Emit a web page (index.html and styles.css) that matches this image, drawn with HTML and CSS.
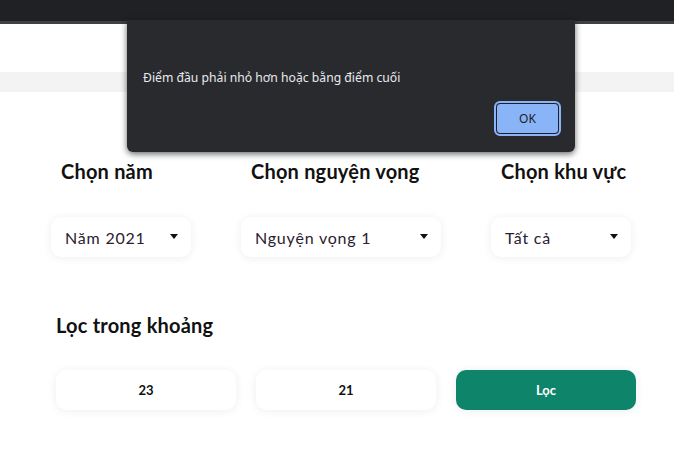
FILE: index.html
```html
<!DOCTYPE html>
<html lang="vi">
<head>
<meta charset="utf-8">
<link rel="stylesheet" href="styles.css">
</head>
<body>
<div class="topbar"></div>
<div class="header"></div>
<div class="band"></div>
<main class="content">
  <section class="filters">
    <div class="field">
      <h3 class="label">Chọn năm</h3>
      <div class="select sel-sm"><span>Năm 2021</span><i class="caret"></i></div>
    </div>
    <div class="field">
      <h3 class="label">Chọn nguyện vọng</h3>
      <div class="select sel-lg"><span>Nguyện vọng 1</span><i class="caret"></i></div>
    </div>
    <div class="field">
      <h3 class="label">Chọn khu vực</h3>
      <div class="select sel-sm"><span>Tất cả</span><i class="caret"></i></div>
    </div>
  </section>
  <section class="range">
    <h3 class="label range-label">Lọc trong khoảng</h3>
    <div class="range-row">
      <div class="box">23</div>
      <div class="box">21</div>
      <div class="box btn">Lọc</div>
    </div>
  </section>
</main>
<div class="dialog">
  <p class="msg">Điểm đầu phải nhỏ hơn hoặc bằng điểm cuối</p>
  <div class="actions"><button class="ok">OK</button></div>
</div>
</body>
</html>
```
FILE: styles.css
```css
* { box-sizing: border-box; }
html, body { margin: 0; padding: 0; background: #fff; }
body {
  width: 674px; height: 457px; overflow: hidden; position: relative;
  font-family: "Lato", "Noto Sans", sans-serif; color: #111;
}
.topbar { background: #202124; border-bottom: 3px solid #3f4043; height: 24px; }
.header { height: 48px; background: #fff; }
.band { height: 20px; background: #f3f3f3; }
.filters { display: flex; gap: 50px; padding: 66px 0 0 51px; }
.field { display: flex; flex-direction: column; gap: 32px; }
.label { margin: 0; font-size: 20px; font-weight: 700; line-height: 27px; color: #111; padding-left: 10px; letter-spacing: 0.2px; }
.select {
  height: 40px; border-radius: 10px; background: #fff;
  box-shadow: 0 1px 10px rgba(0,0,0,0.07);
  display: flex; align-items: center; justify-content: space-between;
  padding: 0 13px 0 14px; font-size: 16px; letter-spacing: 0.8px; color: #2a2030; font-weight: 400;
}
.sel-sm { width: 140px; }
.sel-lg { width: 200px; }
.caret { width: 0; height: 0; border-left: 4.5px solid transparent; border-right: 4.5px solid transparent; border-top: 5px solid #111; margin-top: -2px; }
.range { padding: 55px 0 0 56px; }
.range-label { padding-left: 0; }
.range-row { display: flex; gap: 20px; margin-top: 31px; }
.box {
  width: 180px; height: 40px; border-radius: 10px; background: #fff;
  box-shadow: 0 1px 10px rgba(0,0,0,0.07);
  display: flex; align-items: center; justify-content: center;
  font-size: 13px; font-weight: 700; color: #111;
}
.btn { background: #0e846a; color: #fff; }
.dialog {
  position: absolute; left: 127px; top: 20px; width: 448px; height: 132px;
  background: #292a2e; border-radius: 0 0 6px 6px;
  box-shadow: 0 2px 6px rgba(0,0,0,0.6);
  padding: 49px 16px 0 16px;
}
.msg { margin: 0; font-family: "Noto Sans", "Open Sans", sans-serif; font-size: 12.2px; line-height: 18px; color: #e8eaed; }
.actions { display: flex; justify-content: flex-end; margin-top: 16px; }
.ok {
  width: 63px; height: 31px; background: #8ab4f8; color: #202124;
  border: 1px solid #202124; border-radius: 4px; outline: 2px solid #8ab4f8; outline-offset: 0;
  font-family: "Noto Sans", "Open Sans", sans-serif; font-size: 12px; padding: 0;
}
```
